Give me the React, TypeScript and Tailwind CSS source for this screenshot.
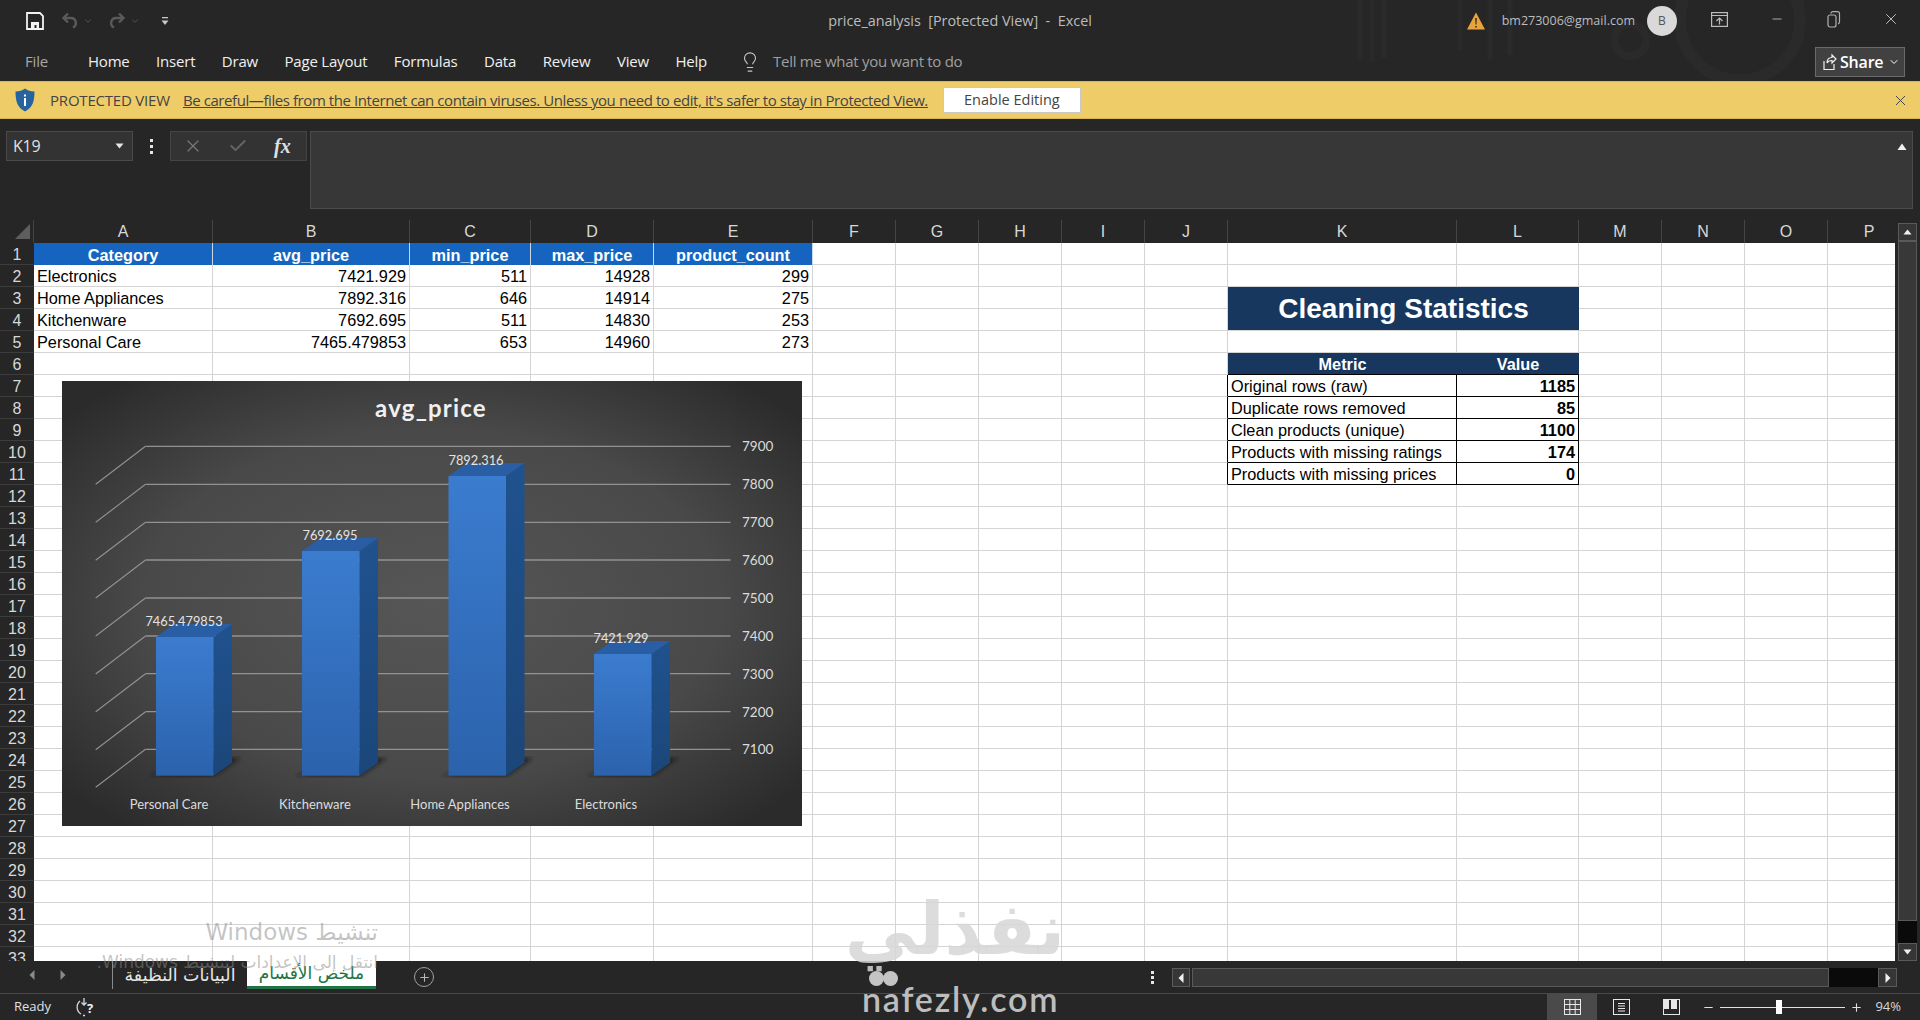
import { Check, ChevronDown, Lightbulb, Minus, Plus, X } from "lucide-react";

const columns = ["A", "B", "C", "D", "E", "F", "G", "H", "I", "J", "K", "L", "M", "N", "O", "P"];
const rowNumbers = Array.from({ length: 33 }, (_, i) => i + 1);
const tabs = ["Home", "Insert", "Draw", "Page Layout", "Formulas", "Data", "Review", "View", "Help"];

const priceRows = [
  ["Electronics", "7421.929", "511", "14928", "299"],
  ["Home Appliances", "7892.316", "646", "14914", "275"],
  ["Kitchenware", "7692.695", "511", "14830", "253"],
  ["Personal Care", "7465.479853", "653", "14960", "273"],
];
const priceHeaders = ["Category", "avg_price", "min_price", "max_price", "product_count"];
const statsRows = [
  ["Original rows (raw)", "1185"],
  ["Duplicate rows removed", "85"],
  ["Clean products (unique)", "1100"],
  ["Products with missing ratings", "174"],
  ["Products with missing prices", "0"],
];

const gridY = [446.3, 484.3, 522.3, 560, 598, 636, 673.7, 711.7, 749.3];
const axisLabels = ["7900", "7800", "7700", "7600", "7500", "7400", "7300", "7200", "7100"];
const bars = [
  { x: 156, top: 637, label: "7465.479853", lx: 184, ly: 626, name: "Personal Care", nx: 169 },
  { x: 302, top: 551, label: "7692.695", lx: 330, ly: 540, name: "Kitchenware", nx: 315 },
  { x: 448.5, top: 476, label: "7892.316", lx: 476, ly: 465, name: "Home Appliances", nx: 460 },
  { x: 594, top: 654, label: "7421.929", lx: 621, ly: 643, name: "Electronics", nx: 606 },
];

function cellContent(row: number, col: number) {
  const base = "border-r border-b border-[#d4d4d4] bg-white text-black pl-[3px] pr-[3px] text-[16.3px] leading-[23px] whitespace-nowrap overflow-hidden";
  if (row === 1 && col < 5) {
    return <div key={col} className="border-r border-[#c9d6e8] bg-[#1565c0] text-white font-bold text-center text-[16.3px] leading-[24px] whitespace-nowrap overflow-hidden">{priceHeaders[col]}</div>;
  }
  if (row >= 2 && row <= 5 && col < 5) {
    return <div key={col} className={`${base} ${col > 0 ? "text-right" : ""}`}>{priceRows[row - 2][col]}</div>;
  }
  if (row === 6 && col === 10) {
    return <div key={col} className="border-b border-black bg-[#17375e] text-white font-bold text-center text-[16.3px] leading-[23px]">Metric</div>;
  }
  if (row === 6 && col === 11) {
    return <div key={col} className="border-b border-black bg-[#17375e] text-white font-bold text-center text-[16.3px] leading-[23px]">Value</div>;
  }
  if (row >= 7 && row <= 11 && col === 9) {
    return <div key={col} className="border-r border-b border-r-black border-b-[#d4d4d4] bg-white" />;
  }
  if (row >= 7 && row <= 11 && col === 10) {
    return <div key={col} className="border-r border-b border-black bg-white text-black pl-[3px] text-[16.3px] leading-[23px] whitespace-nowrap overflow-hidden">{statsRows[row - 7][0]}</div>;
  }
  if (row >= 7 && row <= 11 && col === 11) {
    return <div key={col} className="border-r border-b border-black bg-white text-black font-bold text-right pr-[3px] text-[16.3px] leading-[23px]">{statsRows[row - 7][1]}</div>;
  }
  return <div key={col} className={base} />;
}

function GridRow({ row }: { row: number }) {
  const cells = [];
  for (let col = 0; col < columns.length; col++) {
    // K3:L4 is one merged title cell
    if (row === 3 && col === 10) {
      cells.push(
        <div key="title" className="col-span-2 row-span-2 bg-[#17375e] text-white font-bold text-[28px] flex items-center justify-center border-b border-[#d4d4d4]">
          Cleaning Statistics
        </div>
      );
      continue;
    }
    if ((row === 3 && col === 11) || (row === 4 && (col === 10 || col === 11))) continue;
    cells.push(cellContent(row, col));
  }
  return (
    <>
      <div className="bg-[#262626] text-[#d8d8d8] text-center text-[16px] leading-[24px] border-b border-[#3c3c3c] overflow-hidden">{row}</div>
      {cells}
    </>
  );
}

function PriceChart() {
  return (
    <svg className="absolute left-[62px] top-[161px] font-['Lato',sans-serif]" width="740" height="445" viewBox="62 381 740 445">
      <defs>
        <radialGradient id="chartBg" cx="50%" cy="50%" r="65%">
          <stop offset="0%" stopColor="#565656" />
          <stop offset="60%" stopColor="#494949" />
          <stop offset="100%" stopColor="#2b2b2b" />
        </radialGradient>
        <linearGradient id="barFront" x1="0" y1="0" x2="0" y2="1">
          <stop offset="0%" stopColor="#3b7ccf" />
          <stop offset="100%" stopColor="#2b62ac" />
        </linearGradient>
        <linearGradient id="barSide" x1="0" y1="0" x2="0" y2="1">
          <stop offset="0%" stopColor="#20528f" />
          <stop offset="100%" stopColor="#1b4679" />
        </linearGradient>
        <filter id="soft"><feGaussianBlur stdDeviation="2" /></filter>
      </defs>
      <rect x="62" y="381" width="740" height="445" fill="url(#chartBg)" />
      <text x="431" y="417" textAnchor="middle" fill="#f0f0f0" fontSize="24" fontWeight="700" letterSpacing="1.2">avg_price</text>
      {gridY.map((y, i) => (
        <g key={y}>
          <line x1="145.5" y1={y} x2="730.5" y2={y} stroke="#929292" strokeWidth="1.3" />
          <line x1="95.7" y1={y + 38} x2="145.5" y2={y} stroke="#929292" strokeWidth="1.1" />
          <text x="742" y={y + 5} fill="#dcdcdc" fontSize="13.5">{axisLabels[i]}</text>
        </g>
      ))}
      {bars.map((b) => (
        <g key={b.name}>
          <polygon points={`${b.x - 7},776 ${b.x + 58},776 ${b.x + 84},758 ${b.x + 70},758`} fill="#1c1c1c" filter="url(#soft)" />
          <polygon points={`${b.x + 57.5},${b.top} ${b.x + 76},${b.top - 13} ${b.x + 76},762.7 ${b.x + 57.5},775.7`} fill="url(#barSide)" />
          <polygon points={`${b.x},${b.top} ${b.x + 18.5},${b.top - 13} ${b.x + 76},${b.top - 13} ${b.x + 57.5},${b.top}`} fill="#2a5ea4" />
          <rect x={b.x} y={b.top} width="57.5" height={775.7 - b.top} fill="url(#barFront)" />
          <text x={b.lx} y={b.ly} textAnchor="middle" fill="#e4e4e4" fontSize="12.8">{b.label}</text>
          <text x={b.nx} y="809" textAnchor="middle" fill="#dcdcdc" fontSize="13">{b.name}</text>
        </g>
      ))}
    </svg>
  );
}

export default function App() {
  return (
    <div className="relative w-[1920px] h-[1020px] overflow-hidden bg-[#262626] flex flex-col font-['Open_Sans',sans-serif] text-[#e6e6e6]">
      {/* Title bar */}
      <div className="relative h-[42px] grid grid-cols-[1fr_auto_1fr] items-center">
        <svg className="absolute left-[1340px] top-0" width="470" height="81" fill="none" stroke="#2a2a2a">
          <path d="M20 0v60M32 0v62M44 0v58M120 0v50M150 0v60M170 0v55" strokeWidth="5" />
          <circle cx="290" cy="40" r="16" strokeWidth="8" />
          <circle cx="400" cy="20" r="60" strokeWidth="12" />
        </svg>
        <div className="relative flex items-center pl-[26px]">
          <svg width="18" height="18" viewBox="0 0 18 18" fill="none">
            <path d="M1 1h13l3 3v13H1z" stroke="#f2f2f2" strokeWidth="1.8" />
            <path d="M5 17v-7h8v7h-2.500v-4h-2v4z" fill="#f2f2f2" />
          </svg>
          <svg className="ml-[17px]" width="18" height="18" viewBox="0 0 18 18" fill="none" stroke="#5a5a5a" strokeWidth="2.4">
            <path d="M7 1.500 2.500 6 7 10.500M3 6h7a5 5 0 0 1 2 9.500" />
          </svg>
          <ChevronDown className="ml-[4px] text-[#5a5a5a]" size={10} />
          <svg className="ml-[15px]" width="18" height="18" viewBox="0 0 18 18" fill="none" stroke="#5a5a5a" strokeWidth="2.4">
            <path d="M11 1.500 15.500 6 11 10.500M15 6H8a5 5 0 0 0-2 9.500" />
          </svg>
          <ChevronDown className="ml-[4px] text-[#5a5a5a]" size={10} />
          <svg className="ml-[21px]" width="8" height="9" viewBox="0 0 8 9" fill="#c8c8c8">
            <rect x="1" y="0" width="6" height="1.300" />
            <path d="M0.500 3.500h7L4 8z" />
          </svg>
        </div>
        <div className="relative text-[14.4px] text-[#bdbdbd] whitespace-pre">price_analysis  [Protected View]  -  Excel</div>
        <div className="relative flex items-center justify-end h-full">
          <svg width="20" height="20" viewBox="0 0 20 20" className="mr-[16px]">
            <path d="M10 1.500 19 18.500H1z" fill="#e8a33d" />
            <path d="M9.200 7h1.600l-.3 6.500h-1zM9.200 15h1.600v1.600H9.200z" fill="#3a2a10" />
          </svg>
          <span className="text-[12.5px] text-[#bdbdbd] mr-[12px]">bm273006@gmail.com</span>
          <span className="w-[30px] h-[30px] rounded-full bg-[#d9d9d9] text-[#555] text-[12px] flex items-center justify-center mr-[34px]">B</span>
          <svg width="17" height="15" viewBox="0 0 17 15" fill="none" stroke="#bcbcbc" strokeWidth="1.2" className="mr-[42px] mb-[4px]">
            <rect x="0.600" y="0.600" width="15.800" height="13.800" />
            <path d="M1 3.500h15M8.500 12.500V6M5.500 9l3-3 3 3" />
          </svg>
          <Minus className="text-[#a8a8a8] mr-[43px] mb-[4px]" size={14} />
          <svg width="14" height="17" viewBox="0 0 14 17" fill="none" stroke="#b0b0b0" strokeWidth="1.2" className="mr-[41px] mb-[4px]">
            <rect x="1" y="4" width="8" height="12" rx="2" />
            <path d="M4 2.500c0-1 .8-1.800 2-1.800h4.500c1.200 0 2 .8 2 2V11c0 1-.6 1.600-1.500 1.800" />
          </svg>
          <X className="text-[#c0c0c0] mr-[20px] mb-[4px]" size={18} strokeWidth={1.3} />
        </div>
      </div>

      {/* Ribbon tabs */}
      <div className="relative h-[39px] flex items-center pl-[25px] text-[15px] tracking-[-0.2px]">
        <span className="text-[#a8a8a8] mr-[40px]">File</span>
        <div className="flex items-center gap-[26.5px] text-[#f0f0f0]">
          {tabs.map((t) => (
            <span key={t}>{t}</span>
          ))}
        </div>
        <Lightbulb className="ml-[32px] text-[#c8c8c8]" size={22} strokeWidth={1.2} />
        <span className="ml-[12px] text-[#a0a0a0] tracking-[-0.3px]">Tell me what you want to do</span>
        <div className="ml-auto mr-[15px] w-[90px] h-[30px] bg-[#414141] border border-[#6a6a6a] flex items-center pl-[5px] gap-[3px]">
          <svg width="16" height="18" viewBox="0 0 16 18" fill="none" stroke="#f0f0f0" strokeWidth="1.2">
            <path d="M3 8v8.500h10V11M6 10c0-4 2-5.500 5-5.500V2l4 4-4 4V7.500c-2 0-4 .5-5 2.500z" />
          </svg>
          <span className="text-white text-[16px] font-semibold">Share</span>
          <ChevronDown size={12} className="text-white ml-[2px]" />
        </div>
      </div>

      {/* Protected view bar */}
      <div className="relative h-[38px] bg-[#eecd69] border-y border-[#d8b658] flex items-center pl-[15px] text-[15px] text-[#444]">
        <svg width="20" height="24" viewBox="0 0 20 24">
          <path d="M10 0.500c2.500 2 5.500 3 9.500 3 0 9-1.500 16-9.500 20C2 19.500.5 12.500 .5 3.500c4 0 7-1 9.500-3z" fill="#27649f" />
          <rect x="9" y="10" width="2" height="8" fill="#fff" />
          <rect x="9" y="6.500" width="2" height="2" fill="#fff" />
        </svg>
        <span className="ml-[15px] font-medium tracking-[-0.2px]">PROTECTED VIEW</span>
        <span className="ml-[13px] underline tracking-[-0.42px]">Be careful—files from the Internet can contain viruses. Unless you need to edit, it's safer to stay in Protected View.</span>
        <button className="ml-[15px] w-[138px] h-[26px] bg-white border border-[#c8c8c8] text-[#444] text-[14.5px] flex items-center justify-center">Enable Editing</button>
        <X className="ml-auto mr-[11px] text-[#444]" size={17} strokeWidth={1.4} />
      </div>

      {/* Formula bar */}
      <div className="h-[101px] flex items-start pt-[12px] pl-[6px]">
        <div className="w-[127px] h-[30px] bg-[#333333] border border-[#4a4a4a] flex items-center justify-between pl-[6px] pr-[8px] text-[16px] text-[#e0e0e0] tracking-[-0.2px]">
          K19
          <svg width="9" height="6" viewBox="0 0 9 6" fill="#e6e6e6"><path d="M0.500 0.500h8L4.500 5.500z" /></svg>
        </div>
        <div className="w-[37px] h-[30px] flex flex-col items-center justify-center gap-[3px]">
          <span className="w-[3px] h-[3px] bg-[#e6e6e6]" />
          <span className="w-[3px] h-[3px] bg-[#e6e6e6]" />
          <span className="w-[3px] h-[3px] bg-[#e6e6e6]" />
        </div>
        <div className="w-[137px] h-[30px] bg-[#333333] border border-[#444444] flex items-center pl-[12px]">
          <X className="text-[#777]" size={20} strokeWidth={1.5} />
          <Check className="ml-[25px] text-[#666]" size={20} strokeWidth={2.2} />
          <span className="ml-[26px] font-['Liberation_Serif',serif] italic font-bold text-[20px] text-[#e0e0e0]">fx</span>
        </div>
        <div className="ml-[3px] w-[1603px] h-[78px] bg-[#373737] border border-[#4c4c4c] flex justify-end pt-[11px] pr-[5px]">
          <svg width="10" height="8" viewBox="0 0 10 8" fill="#f0f0f0"><path d="M5 0.500 9.500 7H.5z" /></svg>
        </div>
      </div>

      {/* Sheet */}
      <div className="relative h-[741px] overflow-hidden flex">
        <div className="w-[1895px] overflow-hidden grid grid-cols-[34px_179px_197px_121px_123px_159px_83px_83px_83px_83px_83px_229px_122px_83px_83px_83px_83px] grid-rows-[23px_repeat(33,22px)] font-['Liberation_Sans',sans-serif]">
          <div className="bg-[#262626] flex items-end justify-end pr-[3px] pb-[4px] border-r border-[#444]">
            <svg width="15" height="15" viewBox="0 0 15 15"><path d="M15 0v15H0z" fill="#5e5e5e" /></svg>
          </div>
          {columns.map((c) => (
            <div key={c} className="bg-[#262626] text-[#d8d8d8] text-center text-[16px] leading-[20px] pt-[2px] border-r border-[#454545] font-normal">{c}</div>
          ))}
          {rowNumbers.map((r) => (
            <GridRow key={r} row={r} />
          ))}
        </div>
        <PriceChart />
        {/* Vertical scrollbar */}
        <div className="ml-[3px] w-[19px] flex flex-col pt-[3px]">
          <div className="h-[18px] bg-[#363636] border border-[#5a5a5a] flex items-center justify-center">
            <svg width="9" height="6" viewBox="0 0 9 6" fill="#f0f0f0"><path d="M4.500 0.500 8.500 5.500h-8z" /></svg>
          </div>
          <div className="flex-1 bg-[#383838] border border-[#5a5a5a]" />
          <div className="h-[22px] bg-[#0a0a0a]" />
          <div className="h-[18px] bg-[#363636] border border-[#5a5a5a] flex items-center justify-center">
            <svg width="9" height="6" viewBox="0 0 9 6" fill="#f0f0f0"><path d="M.5 .5h8L4.500 5.500z" /></svg>
          </div>
        </div>
      </div>

      {/* Sheet tabs */}
      <div className="relative h-[32px] flex items-start">
        <div className="w-[112px] h-[28px] flex items-center pl-[29px] gap-[25px]">
          <svg width="6" height="10" viewBox="0 0 6 10" fill="#8a8a8a"><path d="M5.500 0v10L.5 5z" /></svg>
          <svg width="6" height="10" viewBox="0 0 6 10" fill="#8a8a8a"><path d="M.5 0v10l5-5z" /></svg>
        </div>
        <div className="h-[28px] border-l border-[#8a8a8a] w-[135px] flex items-center justify-center font-['DejaVu_Sans',sans-serif] text-[17.4px] text-[#e6e6e6]" dir="rtl">البيانات النظيفة</div>
        <div className="h-[28px] w-[129px] bg-white border-b-[3px] border-[#217346] flex items-center justify-center font-['DejaVu_Sans',sans-serif] text-[17px] text-[#217346]" dir="rtl">ملخص الأقسام</div>
        <div className="ml-[38px] mt-[6px] w-[20px] h-[20px] rounded-full border border-[#a0a0a0] flex items-center justify-center">
          <Plus size={13} className="text-[#b8b8b8]" />
        </div>
        <div className="ml-[717px] mt-[10px] flex flex-col gap-[2px]">
          <span className="w-[3px] h-[3px] bg-[#e6e6e6]" />
          <span className="w-[3px] h-[3px] bg-[#e6e6e6]" />
          <span className="w-[3px] h-[3px] bg-[#e6e6e6]" />
        </div>
        <div className="ml-[18px] mt-[7px] flex h-[19px] w-[725px]">
          <div className="w-[18px] bg-[#363636] border border-[#5a5a5a] flex items-center justify-center">
            <svg width="6" height="10" viewBox="0 0 6 10" fill="#f0f0f0"><path d="M5.500 0v10L.5 5z" /></svg>
          </div>
          <div className="ml-[2px] w-[637px] bg-[#383838] border border-[#5a5a5a]" />
          <div className="w-[49px] bg-[#0a0a0a]" />
          <div className="w-[19px] bg-[#363636] border border-[#5a5a5a] flex items-center justify-center">
            <svg width="6" height="10" viewBox="0 0 6 10" fill="#f0f0f0"><path d="M.5 0v10l5-5z" /></svg>
          </div>
        </div>
      </div>

      {/* Status bar */}
      <div className="h-[27px] border-t border-[#4a4a4a] flex items-center pl-[14px] text-[13px] text-[#e0e0e0]">
        <span>Ready</span>
        <svg className="ml-[24px] overflow-visible" width="22" height="20" viewBox="0 0 22 20" fill="none" stroke="#d8d8d8" strokeWidth="1.3">
          <path d="M5 4a8 8 0 0 0 1 13M9 1v7M6.500 5.500 9 8l2.500-2.500" />
          <path d="M8 18.500h3" strokeDasharray="2 1.500" />
          <text x="12" y="16" fill="#f0f0f0" stroke="none" fontSize="13" fontWeight="700">?</text>
        </svg>
        <div className="ml-auto w-[50px] h-full bg-[#4a4a4a] flex items-center justify-center">
          <svg width="17" height="16" viewBox="0 0 17 16" fill="none" stroke="#e8e8e8" strokeWidth="1">
            <rect x="0.500" y="0.500" width="16" height="15" />
            <path d="M5.800 .5v15M11.200 .5v15M.5 5.500h16M.5 10.500h16" />
          </svg>
        </div>
        <div className="w-[49px] flex justify-center">
          <svg width="17" height="16" viewBox="0 0 17 16" fill="none" stroke="#e8e8e8" strokeWidth="1">
            <rect x="0.500" y="0.500" width="16" height="15" />
            <path d="M5 4.500h7M5 7h7M5 9.500h7M5 12h7" />
          </svg>
        </div>
        <div className="w-[50px] flex justify-center">
          <svg width="17" height="16" viewBox="0 0 17 16" fill="none" stroke="#e8e8e8" strokeWidth="1">
            <rect x="0.500" y="0.500" width="16" height="15" />
            <path d="M1 1h5v9H1zM8 1h6v9H8z" fill="#e8e8e8" stroke="none" />
          </svg>
        </div>
        <Minus className="ml-[6px] text-[#e0e0e0]" size={13} />
        <div className="relative ml-[5px] w-[125px] h-px bg-[#e0e0e0]">
          <span className="absolute left-[56px] top-[-7px] w-[6px] h-[14px] bg-white" />
        </div>
        <Plus className="ml-[5px] text-[#e0e0e0]" size={13} />
        <span className="ml-[12px] mr-[19px] text-[#d8d8d8]">94%</span>
      </div>

      {/* Windows activation watermark */}
      <div className="absolute left-[205px] top-[915px] w-[173px] text-[23px] text-[#8a8a8a]/50 font-['DejaVu_Sans',sans-serif] whitespace-nowrap" dir="rtl">تنشيط Windows</div>
      <div className="absolute left-[97px] top-[950px] w-[281px] text-[17px] text-[#8a8a8a]/50 font-['DejaVu_Sans',sans-serif] whitespace-nowrap" dir="rtl">انتقل إلى الإعدادات لتنشيط Windows.</div>

      {/* Site watermark */}
      <div className="absolute left-[853px] top-[884px] w-[212px] text-center text-[72px] leading-[90px] font-bold text-[#d6d6d6]/85 font-['DejaVu_Sans',sans-serif]" dir="rtl">نفذلي</div>
      <div className="absolute left-[869px] top-[971px] flex">
        <span className="w-[15px] h-[15px] rounded-full bg-[#c4c4c4]" />
        <span className="w-[15px] h-[15px] rounded-full bg-[#c4c4c4] -ml-[1px]" />
      </div>
      <div className="absolute left-[862px] top-[977px] text-[34px] leading-[44px] font-semibold tracking-[1.8px] text-[#bdbdbd] font-['Lato',sans-serif]">nafezly.com</div>
    </div>
  );
}
